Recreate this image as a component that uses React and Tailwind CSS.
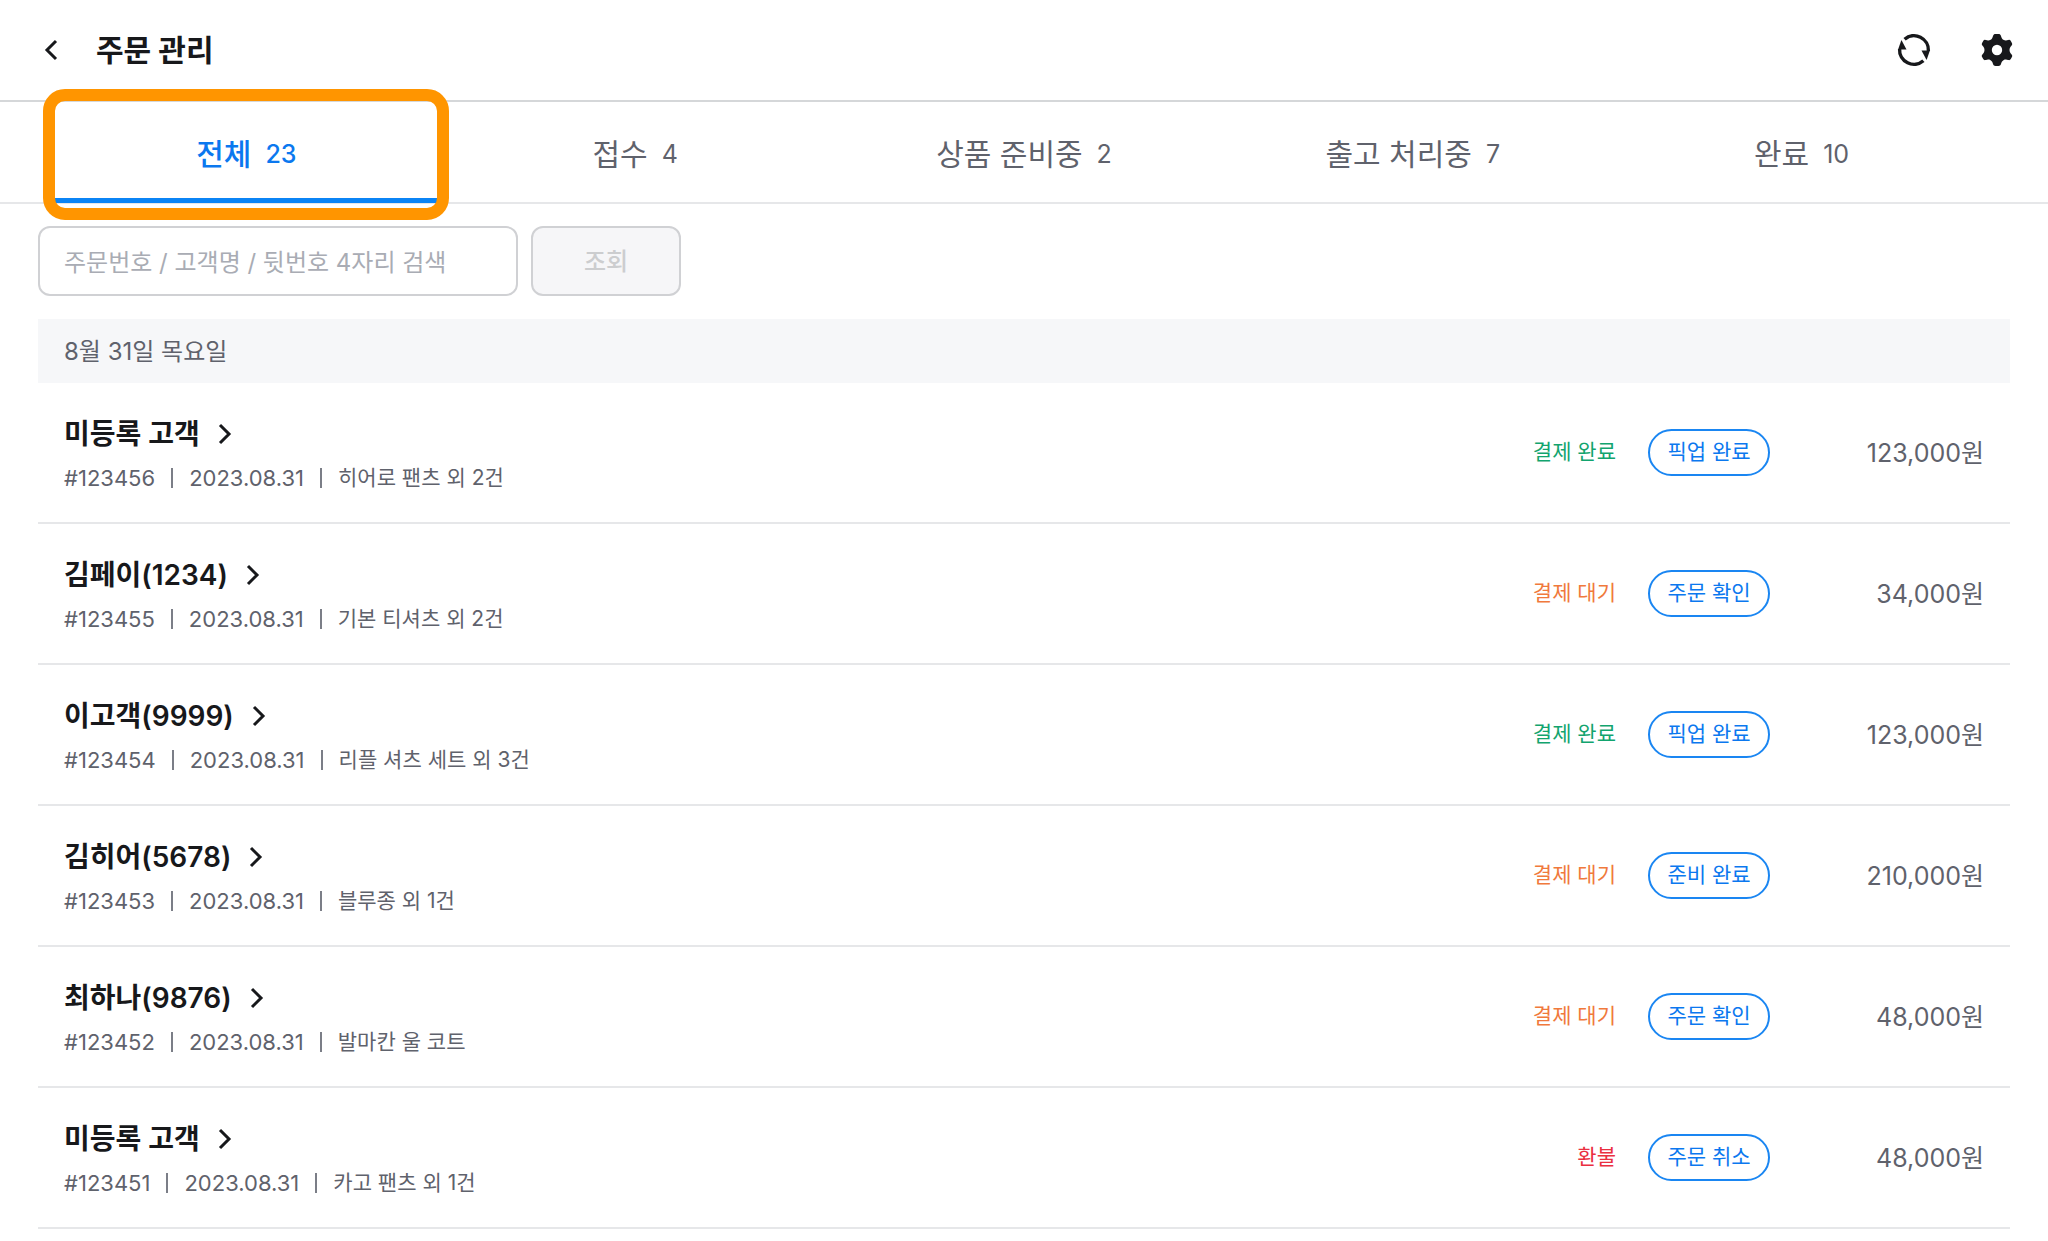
import React, { useState } from "react";

const tabs = [
	{ id: "all", label: "전체", count: 23 },
	{ id: "received", label: "접수", count: 4 },
	{ id: "preparing", label: "상품 준비중", count: 2 },
	{ id: "shipping", label: "출고 처리중", count: 7 },
	{ id: "done", label: "완료", count: 10 },
];

const orders = [
	{ id: 123456, name: "미등록 고객", date: "2023.08.31", items: "히어로 팬츠 외 2건", payment: "결제 완료", action: "픽업 완료", price: 123000 },
	{ id: 123455, name: "김페이(1234)", date: "2023.08.31", items: "기본 티셔츠 외 2건", payment: "결제 대기", action: "주문 확인", price: 34000 },
	{ id: 123454, name: "이고객(9999)", date: "2023.08.31", items: "리플 셔츠 세트 외 3건", payment: "결제 완료", action: "픽업 완료", price: 123000 },
	{ id: 123453, name: "김히어(5678)", date: "2023.08.31", items: "블루종 외 1건", payment: "결제 대기", action: "준비 완료", price: 210000 },
	{ id: 123452, name: "최하나(9876)", date: "2023.08.31", items: "발마칸 울 코트", payment: "결제 대기", action: "주문 확인", price: 48000 },
	{ id: 123451, name: "미등록 고객", date: "2023.08.31", items: "카고 팬츠 외 1건", payment: "환불", action: "주문 취소", price: 48000 },
];

const paymentColors = {
	"결제 완료": "text-[#12a46e]",
	"결제 대기": "text-[#f0793c]",
	환불: "text-[#ea2f40]",
};

function Chevron({ left }) {
	return (
		<svg width="14" height="22" viewBox="0 0 14 22" fill="none" aria-hidden="true">
			<path
				d={left ? "M12 2 3 11l9 9" : "M2 2l9 9-9 9"}
				stroke="currentColor"
				strokeWidth="3"
			/>
		</svg>
	);
}

function RefreshIcon() {
	return (
		<svg width="34" height="34" viewBox="0 0 34 34" fill="none" aria-hidden="true">
			<path d="M7.600 6.200A14.400 14.400 0 0 1 31.400 18" stroke="currentColor" strokeWidth="3.4" />
			<path d="M26.400 27.800A14.400 14.400 0 0 1 2.600 16" stroke="currentColor" strokeWidth="3.4" />
			<path d="M24.500 17.500h8.400L29.600 27z" fill="currentColor" />
			<path d="M9.500 16.500H1.100L4.400 7z" fill="currentColor" />
		</svg>
	);
}

function GearIcon() {
	return (
		<svg width="34" height="34" viewBox="0 0 34 34" aria-hidden="true">
			<path
				fill="currentColor"
				fillRule="evenodd"
				d="M15.5 1h3c1.3 0 2 .6 2.400 1.700l.8 2.200c.4 1 1.100 1.700 2.100 2.200 1 .4 2 .5 3 .2l1.700-.4c1-.2 1.800.1 2.300 1l1.100 2c.5.9.4 1.800-.3 2.600l-1.200 1.500c-.6.8-.9 1.900-.9 3s.3 2.200.9 3l1.200 1.500c.7.8.8 1.700.3 2.600l-1.100 2c-.5.9-1.300 1.200-2.300 1l-1.700-.4c-1-.3-2-.2-3 .2-1 .5-1.700 1.200-2.100 2.200l-.8 2.200c-.4 1.100-1.100 1.700-2.400 1.700h-3c-1.300 0-2-.6-2.400-1.700l-.8-2.200c-.4-1-1.100-1.700-2.100-2.200-1-.4-2-.5-3-.2l-1.700.4c-1 .2-1.800-.1-2.300-1l-1.100-2c-.5-.9-.4-1.800.3-2.600l1.200-1.500c.6-.8.9-1.900.9-3s-.3-2.200-.9-3l-1.200-1.500c-.7-.8-.8-1.700-.3-2.600l1.100-2c.5-.9 1.300-1.200 2.300-1l1.700.4c1 .3 2 .2 3-.2 1-.5 1.700-1.200 2.100-2.200l.8-2.200C13.500 1.600 14.200 1 15.500 1ZM17 11.800a5.200 5.200 0 1 0 0 10.400 5.200 5.200 0 0 0 0-10.400Z"
			/>
		</svg>
	);
}

function Divider() {
	return <span className="mx-4 h-5 w-[2px] bg-[#7b7e87]" />;
}

function OrderRow({ order }) {
	return (
		<li className="flex items-center border-b-2 border-[#e6e7e9] px-[26px] pt-[27px] pb-7">
			<div className="flex flex-1 flex-col gap-1">
				<a href={`#${order.id}`} className="flex items-center gap-[18px] self-start text-[28px] leading-[48px] font-semibold text-[#17181b]">
					{order.name}
					<Chevron />
				</a>
				<p className="flex items-center text-[22px] leading-8 text-[#5f626c]">
					<span>#{order.id}</span>
					<Divider />
					<span>{order.date}</span>
					<Divider />
					<span className="text-[21px]">{order.items}</span>
				</p>
			</div>
			<span className={`text-[21px] leading-8 ${paymentColors[order.payment]}`}>
				{order.payment}
			</span>
			<button
				type="button"
				className="ml-8 h-[47px] w-[122px] rounded-full border-2 border-[#1a86f2] text-[21px] text-[#0b78ef]"
			>
				{order.action}
			</button>
			<span className="w-[214px] pt-0.5 text-right text-[25px] leading-8 text-[#5f626c]">
				{order.price.toLocaleString("en-US")}원
			</span>
		</li>
	);
}

export default function App() {
	const [active, setActive] = useState("all");
	const [query, setQuery] = useState("");

	return (
		<div className="min-h-screen bg-white font-[Inter,'Noto_Sans_CJK_KR',sans-serif] text-[#17181b]">
			<header className="flex items-center justify-between border-b-2 border-[#d5d7d9] py-[26px] pr-[34px] pl-11">
				<div className="flex items-center gap-[38px]">
					<button type="button" aria-label="뒤로">
						<Chevron left />
					</button>
					<h1 className="text-[30px] leading-[48px] font-bold">주문 관리</h1>
				</div>
				<div className="flex items-center gap-[49px]">
					<button type="button" aria-label="새로고침">
						<RefreshIcon />
					</button>
					<button type="button" aria-label="설정">
						<GearIcon />
					</button>
				</div>
			</header>

			<nav className="grid grid-cols-5 border-b-2 border-[#e6e7e9] px-[52px]">
				{tabs.map((tab) => (
					<button
						key={tab.id}
						type="button"
						onClick={() => setActive(tab.id)}
						className={`relative flex h-[100px] items-center justify-center gap-[14px] pt-[5px] text-[30px] ${
							tab.id === active ? "font-medium text-[#0b78ef]" : "text-[#5f626c]"
						}`}
					>
						<span>{tab.label}</span>
						<span className="text-[25px]">{tab.count}</span>
						{tab.id === active && (
							<>
								<span className="absolute inset-x-0 -bottom-px h-[5px] bg-[#0b84f5]" />
								<span className="absolute -top-[13px] -right-2 -bottom-[18px] -left-[9px] rounded-[22px] border-12 border-[#ff9500]" />
							</>
						)}
					</button>
				))}
			</nav>

			<main className="px-[38px] pt-[22px]">
				<form className="flex gap-[13px]" onSubmit={(e) => e.preventDefault()}>
					<label htmlFor="search" className="sr-only">
						주문 검색
					</label>
					<input
						id="search"
						type="text"
						value={query}
						onChange={(e) => setQuery(e.target.value)}
						placeholder="주문번호 / 고객명 / 뒷번호 4자리 검색"
						className="h-[70px] w-[480px] rounded-xl border-2 border-[#d0d1d4] px-6 pt-0.5 text-[24px] placeholder:text-[#a9acb4]"
					/>
					<button
						type="submit"
						disabled={!query}
						className="h-[70px] w-[150px] rounded-xl border-2 border-[#d0d1d4] bg-[#f6f6f8] pt-0.5 text-[24px] font-medium text-[#cccdcf]"
					>
						조회
					</button>
				</form>

				<h2 className="mt-[23px] bg-[#f6f7f9] px-[26px] pt-[17px] pb-[15px] text-[24px] leading-8 text-[#5f626c]">
					8월 31일 목요일
				</h2>
				<ul>
					{orders.map((order) => (
						<OrderRow key={order.id} order={order} />
					))}
				</ul>
			</main>
		</div>
	);
}
